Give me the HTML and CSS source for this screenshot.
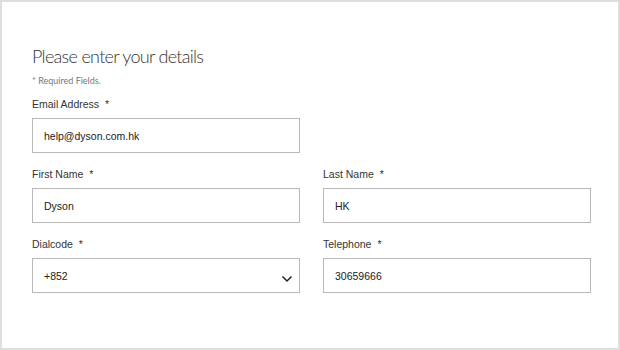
FILE: index.html
```html
<!DOCTYPE html>
<html lang="en">
  <head>
    <meta charset="UTF-8" />
    <title>Your details</title>
    <link rel="stylesheet" href="styles.css">
  </head>
  <body>
    <div class="frame">
      <h2 class="form-title">Please enter your details</h2>
      <p class="required-note">* Required Fields.</p>
      <div class="field-row">
        <div class="field">
          <label class="field-label">Email Address <span class="star">*</span></label>
          <div class="field-box">help@dyson.com.hk</div>
        </div>
      </div>
      <div class="field-row">
        <div class="field">
          <label class="field-label">First Name <span class="star">*</span></label>
          <div class="field-box">Dyson</div>
        </div>
        <div class="field">
          <label class="field-label">Last Name <span class="star">*</span></label>
          <div class="field-box">HK</div>
        </div>
      </div>
      <div class="field-row">
        <div class="field">
          <label class="field-label">Dialcode <span class="star">*</span></label>
          <div class="field-box select-box">
            <span>+852</span>
            <svg class="chevron" width="12" height="8" viewBox="0 0 12 8">
              <path d="M1.5 1.5 L6 6 L10.5 1.5" fill="none" stroke="#222" stroke-width="1.5" />
            </svg>
          </div>
        </div>
        <div class="field">
          <label class="field-label">Telephone <span class="star">*</span></label>
          <div class="field-box">30659666</div>
        </div>
      </div>
    </div>
  </body>
</html>
```

FILE: styles.css
```css
* {
  margin: 0;
  padding: 0;
  box-sizing: border-box;
}
body {
  background: #ffffff;
  font-family: "Liberation Sans", Arial, sans-serif;
  color: #333;
}
.frame {
  width: 620px;
  height: 350px;
  border: 2px solid #dedede;
  padding: 42px 27px 0 30px;
  display: flex;
  flex-direction: column;
}
.form-title {
  font-family: "Lato", sans-serif;
  font-weight: 300;
  font-size: 18px;
  line-height: 24px;
  color: #333;
  letter-spacing: -0.7px;
}
.required-note {
  font-family: "Lato", sans-serif;
  font-size: 9px;
  line-height: 12px;
  color: #777;
  margin-top: 7px;
}
.field-row {
  display: grid;
  grid-template-columns: 268px 268px;
  column-gap: 23px;
  margin-top: 10px;
}
.field-row + .field-row {
  margin-top: 14px;
}
.field-label {
  display: block;
  font-size: 10.5px;
  line-height: 14px;
  color: #333;
  margin-bottom: 7px;
}
.star {
  margin-left: 3px;
}
.field-box {
  height: 35px;
  border: 1px solid #b8b8b8;
  padding: 0 11px;
  font-size: 10.5px;
  color: #222;
  display: flex;
  align-items: center;
}
.select-box {
  justify-content: space-between;
  padding-right: 6px;
}
.chevron {
  margin-top: 6px;
}
```
